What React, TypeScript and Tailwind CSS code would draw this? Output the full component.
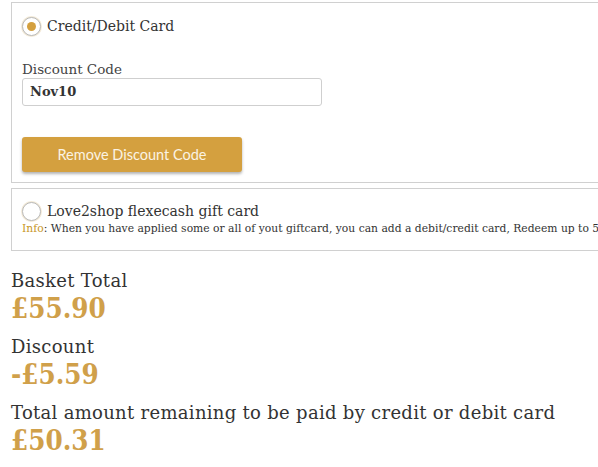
import React from 'react'

const slab = { fontFamily: '"DejaVu Serif", "Liberation Serif", serif' }

const Radio = ({ checked }: { checked?: boolean }) => (
  <span className="w-[19px] h-[19px] rounded-full border border-[#b9b9b9] bg-white flex items-center justify-center shrink-0 shadow-[0_0_0_1px_#f3ead8]">
    {checked && <span className="w-[9px] h-[9px] rounded-full bg-[#d4a03f]" />}
  </span>
)

const Amount = ({ children }: { children: React.ReactNode }) => (
  <div className="text-[27.5px] leading-[32px] font-bold font-stretch-condensed text-[#d0a04a]">{children}</div>
)

export default function App() {
  return (
    <div className="w-[598px] h-[467px] overflow-hidden bg-white text-[#333]" style={slab}>
      <div className="pl-[11px] pt-[2px] w-[640px]">
        <div className="border border-[#d0d0d0] h-[181px] pl-[10px] pt-[14px]">
          <label className="flex items-center gap-[6px] h-[19px]">
            <Radio checked />
            <span className="text-[14px] text-[#333]">Credit/Debit Card</span>
          </label>
          <div className="mt-[24px] text-[13.5px] text-[#444] leading-[18px]">Discount Code</div>
          <div className="w-[300px] h-[28px] border border-[#cfcfcf] rounded-[3px] flex items-center pl-[7px] text-[13px] font-bold text-[#333]">
            Nov10
          </div>
          <button
            className="mt-[31px] w-[220px] h-[35px] rounded-[3px] bg-[#d4a03f] text-[#fbf3e3] text-[14.5px] shadow-[0_2px_3px_rgba(0,0,0,0.3)]"
            style={{ fontFamily: 'Lato, "Open Sans", sans-serif' }}
          >
            Remove Discount Code
          </button>
        </div>
        <div className="mt-[5px] border border-[#d0d0d0] h-[63px] pl-[10px] pt-[12px]">
          <label className="flex items-center gap-[6px] h-[21px]">
            <Radio />
            <span className="text-[14px] text-[#333]">Love2shop flexecash gift card</span>
          </label>
          <div className="text-[10.75px] leading-[14px] whitespace-nowrap text-[#333]">
            <span className="text-[#c8961f]">Info</span>: When you have applied some or all of yout giftcard, you can add a debit/credit card, Redeem up to 5 giftcards
          </div>
        </div>
      </div>
      <div className="pl-[11px] pt-[19px]">
        <div className="text-[18px] leading-[22px] tracking-[0.3px] text-[#333]">Basket Total</div>
        <Amount>£55.90</Amount>
        <div className="mt-[12px] text-[18px] leading-[22px] tracking-[0.3px] text-[#333]">Discount</div>
        <Amount>-£5.59</Amount>
        <div className="mt-[12px] text-[18px] leading-[22px] tracking-[0.3px] text-[#333] whitespace-nowrap">Total amount remaining to be paid by credit or debit card</div>
        <Amount>£50.31</Amount>
      </div>
    </div>
  )
}
